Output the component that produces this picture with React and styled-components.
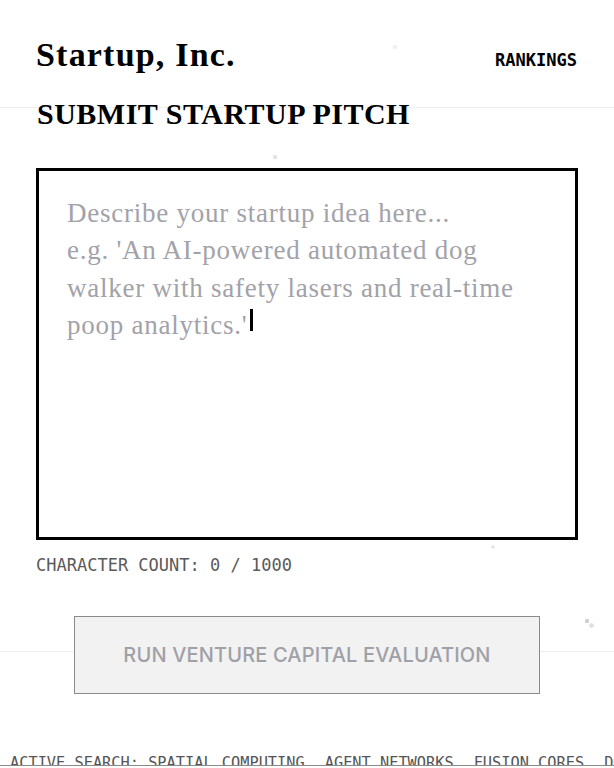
import styled, { createGlobalStyle } from 'styled-components';

const GlobalStyle = createGlobalStyle`
  html, body {
    margin: 0;
    padding: 0;
  }
  body {
    background-color: #fff;
    background-image:
      radial-gradient(circle, #e4e4e4 2px, transparent 2.5px),
      radial-gradient(circle, #e6e6e6 1.5px, transparent 2px),
      radial-gradient(circle, #d0d0d0 2px, transparent 2.5px),
      radial-gradient(circle, #e0e0e0 2px, transparent 2.5px),
      radial-gradient(circle, #f0f0f0 2px, transparent 2.5px),
      linear-gradient(#efefef, #efefef),
      linear-gradient(#f0f0f0, #f0f0f0);
    background-size: 8px 8px, 6px 6px, 6px 6px, 7px 7px, 8px 8px, 100% 1px, 100% 1px;
    background-position:
      271px 153px,
      490px 544px,
      584px 618px,
      588px 622px,
      391px 43px,
      0 107px,
      0 651px;
    background-repeat: no-repeat;
    font-family: "Liberation Serif", serif;
    color: #000;
  }
`;

const Page = styled.div`
  min-height: 768px;
  overflow: hidden;
`;

const Content = styled.main`
  padding: 35px 36px 0;
  display: flex;
  flex-direction: column;
`;

const Header = styled.header`
  display: flex;
  justify-content: space-between;
  align-items: baseline;
`;

const Brand = styled.h1`
  margin: 0;
  font-family: "Liberation Serif", serif;
  font-size: 34px;
  line-height: 40px;
  font-weight: 700;
  letter-spacing: 1.2px;
`;

const NavLink = styled.a`
  font-family: "DejaVu Sans Mono", monospace;
  font-size: 17px;
  font-weight: 700;
  color: #000;
  text-decoration: none;
  padding-right: 1px;
`;

const Title = styled.h2`
  margin: 21px 0 0 1px;
  font-family: "Liberation Serif", serif;
  font-size: 30px;
  line-height: 36px;
  font-weight: 700;
  letter-spacing: 0.5px;
  text-transform: uppercase;
`;

const Editor = styled.div`
  margin-top: 36px;
  border: 3px solid #000;
  padding: 24px 28px;
  box-sizing: border-box;
  height: 372px;
  background: #fff;
`;

const Placeholder = styled.p`
  margin: 0;
  font-family: "Liberation Serif", serif;
  font-size: 27px;
  line-height: 37.4px;
  letter-spacing: 0.75px;
  color: #a2a2a9;
`;

const Caret = styled.span`
  display: inline-block;
  width: 3px;
  height: 22px;
  margin-left: 3px;
  background: #000;
  vertical-align: 3px;
`;

const Counter = styled.div`
  margin-top: 15px;
  font-family: "DejaVu Sans Mono", monospace;
  font-size: 17px;
  line-height: 20px;
  color: #5a5a5a;
`;

const SubmitButton = styled.button`
  align-self: center;
  margin-top: 41px;
  padding: 25px 48px;
  border: 1px solid #8a8a8a;
  background: #f2f2f2;
  color: #a0a0a7;
  font-family: Inter, sans-serif;
  font-size: 20px;
  line-height: 26px;
  font-weight: 500;
  letter-spacing: 0.15px;
  text-transform: uppercase;
  cursor: not-allowed;
`;

const Ticker = styled.div`
  margin-top: 60px;
  height: 11px;
  overflow: hidden;
  border-bottom: 1px solid #8a8a8a;
  display: flex;
  gap: 20px;
  padding-left: 10px;
  white-space: nowrap;
  font-family: "DejaVu Sans Mono", monospace;
  font-size: 15.3px;
  line-height: 18px;
  color: #555;
`;

const tickerItems = [
  'ACTIVE SEARCH: SPATIAL COMPUTING',
  'AGENT NETWORKS',
  'FUSION CORES',
  'DECENTRALIZED BIOTECH',
  'QUANTUM LOGISTICS',
];

export default function App() {
  return (
    <Page>
      <GlobalStyle />
      <Content>
        <Header>
          <Brand>Startup, Inc.</Brand>
          <NavLink href="#">RANKINGS</NavLink>
        </Header>
        <Title>Submit Startup Pitch</Title>
        <Editor>
          <Placeholder>
            Describe your startup idea here...
            <br />
            e.g. 'An AI-powered automated dog walker with safety lasers and
            real-time poop analytics.'
            <Caret />
          </Placeholder>
        </Editor>
        <Counter>CHARACTER COUNT: 0 / 1000</Counter>
        <SubmitButton disabled>Run Venture Capital Evaluation</SubmitButton>
      </Content>
      <Ticker>
        {tickerItems.map((item) => (
          <span key={item}>{item}</span>
        ))}
      </Ticker>
    </Page>
  );
}
